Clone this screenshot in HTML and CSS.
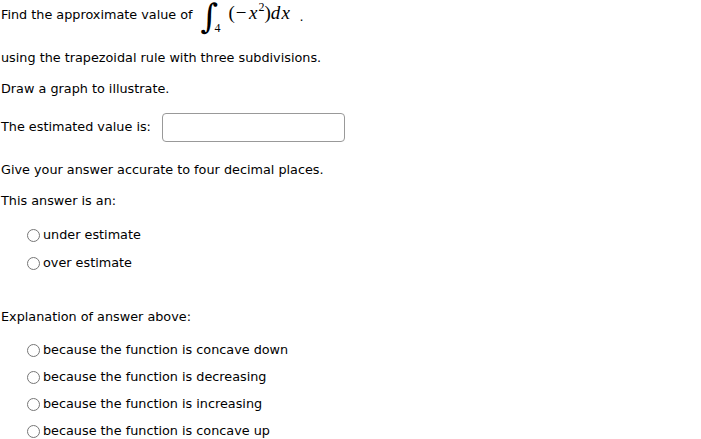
FILE: index.html
```html
<!DOCTYPE html>
<html>
<head>
<meta charset="utf-8">
<link rel="stylesheet" href="styles.css">
</head>
<body>
<div class="q">
  <div class="first">
    <span class="lead">Find the approximate value of</span>
    <span class="math">
      <span class="int">∫</span><span class="lower">4</span>
      <span class="expr"><span class="g w6">(</span><span class="g w13">−</span><span class="g w11 it">x</span><span class="g w6 sup">2</span><span class="g w6">)</span><span class="g w10 it">d</span><span class="g w10 it">x</span></span>
    </span>
    <span class="dot">.</span>
  </div>
  <p class="line">using the trapezoidal rule with three subdivisions.</p>
  <p class="line">Draw a graph to illustrate.</p>
  <div class="answer">
    <span>The estimated value is:</span>
    <input class="box" type="text">
  </div>
  <p class="line give">Give your answer accurate to four decimal places.</p>
  <p class="line">This answer is an:</p>
  <ul class="opts">
    <li><label><input type="radio" name="a">under estimate</label></li>
    <li><label><input type="radio" name="a">over estimate</label></li>
  </ul>
  <p class="line expl">Explanation of answer above:</p>
  <ul class="opts tight">
    <li><label><input type="radio" name="b">because the function is concave down</label></li>
    <li><label><input type="radio" name="b">because the function is decreasing</label></li>
    <li><label><input type="radio" name="b">because the function is increasing</label></li>
    <li><label><input type="radio" name="b">because the function is concave up</label></li>
  </ul>
</div>
</body>
</html>
```
FILE: styles.css
```css
html, body {
  margin: 0;
  padding: 0;
  background: #fff;
}
body {
  font-family: "DejaVu Sans", Verdana, sans-serif;
  font-size: 12.8px;
  line-height: 18px;
  color: #000;
}
.q {
  padding: 0 1px;
}
.first {
  display: flex;
  align-items: center;
  height: 36px;
}
.lead {
  margin-top: -6px;
}
.math {
  display: inline-flex;
  align-items: flex-start;
  margin-left: 8px;
  font-family: "Liberation Serif", "Times New Roman", serif;
  height: 36px;
}
.int {
  font-family: "DejaVu Serif", serif;
  font-style: italic;
  font-size: 34px;
  line-height: 36px;
  height: 36px;
  width: 14px;
  margin-top: -2px;
}
.lower {
  font-size: 12px;
  line-height: 12px;
  align-self: flex-end;
  width: 6px;
  margin: 0 0 2px 0;
}
.expr {
  display: inline-flex;
  align-items: baseline;
  font-size: 19px;
  line-height: 24px;
  margin-left: 8px;
  margin-top: 1px;
}
.g {
  display: inline-block;
  text-align: center;
}
.it {
  font-style: italic;
}
.w6 { width: 6px; }
.w10 { width: 10px; }
.w11 { width: 11px; }
.w13 { width: 13px; }
.sup {
  font-size: 12px;
  position: relative;
  top: -8px;
}
.dot {
  margin-left: 9px;
  margin-top: -2px;
}
.line {
  margin: 13px 0 0 0;
}
.answer {
  display: flex;
  align-items: center;
  gap: 11px;
  margin-top: 14px;
  height: 30px;
}
.box {
  width: 183px;
  height: 29px;
  box-sizing: border-box;
  border: 1px solid #999;
  border-radius: 4px;
  margin: 0;
  padding: 0 4px;
}
.give {
  margin-top: 19px;
}
.opts {
  list-style: none;
  margin: 16px 0 0 0;
  padding: 0 0 0 26px;
}
.opts li {
  height: 18px;
  margin-bottom: 10px;
}
.opts.tight {
  margin-top: 15px;
}
.opts.tight li {
  margin-bottom: 9px;
}
.opts label {
  display: flex;
  align-items: center;
}
.opts input {
  margin: 0 3px 0 0;
  width: 13px;
  height: 13px;
}
.expl {
  margin-top: 36px;
}
```
